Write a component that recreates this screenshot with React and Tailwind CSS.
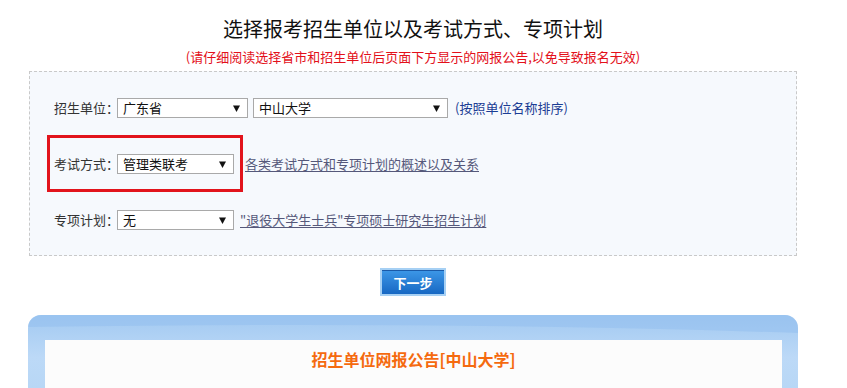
import React from "react";

const font = { fontFamily: '"Noto Sans CJK SC", "Noto Sans", sans-serif' };

function Arrow() {
  return (
    <svg width="7" height="7" viewBox="0 0 7 7" className="shrink-0">
      <polygon points="0,0.5 7,0.5 3.5,7" fill="#111" />
    </svg>
  );
}

function FakeSelect({ value, width }) {
  return (
    <div
      className={`flex h-[20px] shrink-0 items-center justify-between border border-[#a9a9a9] bg-white pl-[5px] pr-[7px] text-[13px] leading-[18px] text-[#111] ${width}`}
    >
      <span className="whitespace-nowrap">{value}</span>
      <Arrow />
    </div>
  );
}

function Label({ children }) {
  return (
    <span className="w-[63px] shrink-0 whitespace-nowrap text-[13px] leading-[20px] text-[#333]">
      {children}
    </span>
  );
}

export default function App() {
  return (
    <div className="h-[388px] w-[847px] overflow-hidden bg-white" style={font}>
      <div className="ml-[29px] w-[768px]">
        <h1 className="mt-[17px] text-center text-[20px] font-normal leading-[24px] text-[#111]">
          选择报考招生单位以及考试方式、专项计划
        </h1>
        <p className="mt-[8px] text-center text-[13px] leading-[16px] text-[#e3101a]">
          (请仔细阅读选择省市和招生单位后页面下方显示的网报公告,以免导致报名无效)
        </p>

        <div className="relative mt-[6px] border border-dashed border-[#c9c9c9] bg-[#f6f9fd] pb-[25px] pl-[24px] pt-[26px]">
          <div className="flex flex-col gap-[36px]">
            <div className="flex h-[20px] items-center">
              <Label>招生单位：</Label>
              <FakeSelect value="广东省" width="w-[131px]" />
              <div className="ml-[5px]">
                <FakeSelect value="中山大学" width="w-[195px]" />
              </div>
              <span className="ml-[7px] whitespace-nowrap text-[13px] leading-[20px] text-[#1b3d94]">
                (按照单位名称排序)
              </span>
            </div>

            <div className="flex h-[20px] items-center">
              <Label>考试方式：</Label>
              <FakeSelect value="管理类联考" width="w-[117px]" />
              <a className="ml-[11px] whitespace-nowrap text-[13px] leading-[20px] text-[#55587a] underline underline-offset-2">
                各类考试方式和专项计划的概述以及关系
              </a>
            </div>

            <div className="flex h-[20px] items-center">
              <Label>专项计划：</Label>
              <FakeSelect value="无" width="w-[117px]" />
              <a className="ml-[6px] whitespace-nowrap text-[13px] leading-[20px] text-[#55587a] underline underline-offset-2">
                "退役大学生士兵"专项硕士研究生招生计划
              </a>
            </div>
          </div>

          <div className="pointer-events-none absolute left-[17px] top-[63px] h-[57px] w-[196px] border-[3px] border-[#e2141c]" />
        </div>

        <div className="mx-auto mt-[12px] h-[28px] w-[66px] border-2 border-[#a6d0f4] bg-gradient-to-b from-[#3d98e8] to-[#1768c3]">
          <div className="flex h-full items-center justify-center border-t border-[#1a5aa8] text-[13px] font-bold leading-none text-white">
            下一步
          </div>
        </div>

        <div className="relative -ml-[1px] mt-[19px] w-[770px] overflow-hidden rounded-t-[13px] bg-gradient-to-b from-[#a2c9f1] via-[#bcd9f7] to-[#b6d6f5] pl-[17px] pr-[16px] pt-[25px]">
          <svg
            className="pointer-events-none absolute left-0 top-0"
            width="770"
            height="25"
            viewBox="0 0 770 25"
          >
            <path d="M0 0 H770 V18 Q420 6 0 12 Z" fill="#94bfee" opacity="0.55" />
          </svg>
          <div className="relative h-[60px] bg-[#fcfcfc] pt-[7px] text-center">
            <span className="text-[16px] font-bold leading-[20px] text-[#f56a0f]">
              招生单位网报公告[中山大学]
            </span>
          </div>
        </div>
      </div>
    </div>
  );
}
